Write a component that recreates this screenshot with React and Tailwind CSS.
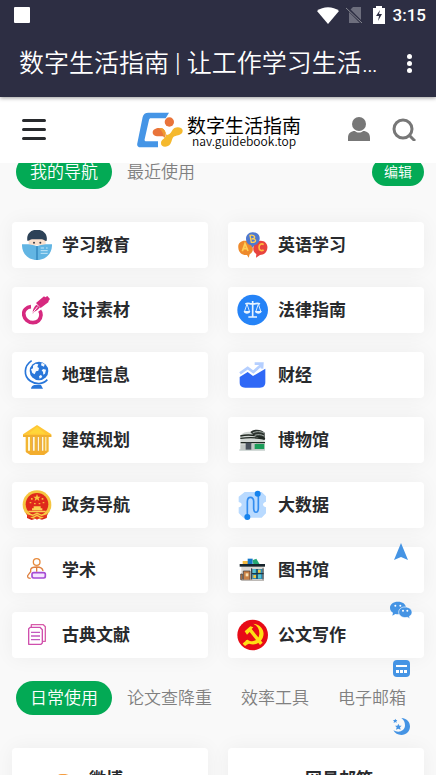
import React, { useState } from 'react';

const EducationIcon = () => (
  <svg viewBox="0 0 90 90" className="h-full w-full" aria-hidden="true">
    <path d="M20 26h51v20H20z" fill="#fbe0cc" />
    <path d="M16 32C13 10 28-1 45-1s33 12 29 33c-6 3-8-4-15-4-9 0-19 0-29 0-6 0-8 6-14 4z" fill="#2d4257" />
    <circle cx="36" cy="38" r="3" fill="#3b3b45" />
    <circle cx="55" cy="38" r="3" fill="#3b3b45" />
    <path d="M0 43c16-1 30 0 45 6 15-6 29-7 45-6 1 27-18 47-45 47S-1 70 0 43z" fill="#62b5e3" />
    <path d="M42 48l3 1 3-1v42h-6z" fill="#3f93c8" />
    <path d="M56 54h10M56 62h21M56 70h21M72 54h5" stroke="#c5e6f7" strokeWidth="3" />
  </svg>
);

const EnglishIcon = () => (
  <svg viewBox="0 0 90 90" className="h-full w-full" aria-hidden="true">
    <path d="M23 32C8 31-1 40 1 54c1 14 13 23 26 21l5 8 3-10c8-5 11-12 9-20-2-13-10-20-21-21z" fill="#ee8a2c" />
    <path d="M68 32c14 0 22 11 20 23-1 13-11 20-22 20l-12 8 1-11c-8-5-10-12-9-19 2-12 10-21 22-21z" fill="#e8433e" />
    <path d="M43 7c14-1 23 8 22 20-1 11-7 17-16 19l-5 7-5-7c-10-3-15-9-15-19 0-12 8-19 19-20z" fill="#4f79cf" />
    <path d="M13 64l8-23 9 22M16 56h12" fill="none" stroke="#ffcf55" strokeWidth="5" />
    <path d="M36 16l4 21c9 1 14-2 12-7-1-3-5-4-11-3 8-1 10-4 8-8-2-4-7-4-13-3z" fill="none" stroke="#ffcf55" strokeWidth="4" />
    <path d="M77 44c-6-5-14-1-14 8 0 9 7 12 14 8" fill="none" stroke="#ffb93e" strokeWidth="5" />
  </svg>
);

const DesignIcon = () => (
  <svg viewBox="0 0 90 90" className="h-full w-full" aria-hidden="true">
    <path d="M27 35C13 36 4 47 5 58c2 15 14 25 28 25 13 0 23-9 24-23 0-5-1-9-4-13" fill="none" stroke="#d6297f" strokeWidth="11" />
    <path d="M32 52c0-8 4-16 11-23l11 8c-5 7-10 11-18 14l-4 6z" fill="#d6297f" />
    <path d="M42 24l24-20 4 3 6-4 8 9-4 5-1 5-23 17z" fill="#d6297f" />
    <path d="M30 56l17-21" stroke="#fff" strokeWidth="3" />
  </svg>
);

const LawIcon = () => (
  <svg viewBox="0 0 90 90" className="h-full w-full overflow-visible" aria-hidden="true">
    <circle cx="44" cy="45" r="46" fill="#2583f7" />
    <path d="M44 18v48M22 27c11-5 14 2 22-1 8 3 11-4 22 1M31 66h26" fill="none" stroke="#e7f3ff" strokeWidth="5" />
    <path d="M27 27l-8 24h16zM61 27l-8 24h16z" fill="none" stroke="#d5e9ff" strokeWidth="3" />
    <path d="M17 48h20c-1 11-19 11-20 0zM51 48h20c-1 11-19 11-20 0z" fill="#e7f3ff" />
  </svg>
);

const GeographyIcon = () => (
  <svg viewBox="0 0 90 90" className="h-full w-full overflow-visible" aria-hidden="true">
    <circle cx="51" cy="33" r="28" fill="#2876d9" />
    <path d="M33 17l8-6 8 2-3 8 5 3-2 8-7 2-4 9-7-4-4-11 6-3zM59 8l9 5-2 7-9-4zM64 27l8 2-3 12-5 3-1-8-4-5zM51 49l6-5 4 7-8 5z" fill="#f5faff" />
    <path d="M29 2C5 18 4 48 25 63c16 11 38 11 51-4" fill="none" stroke="#2876d9" strokeWidth="5" />
    <path d="M37 75h20l6 11H27c1-6 4-10 10-11z" fill="#2876d9" />
  </svg>
);

const FinanceIcon = () => (
  <svg viewBox="0 0 90 90" className="h-full w-full" aria-hidden="true">
    <path d="M6 40l23-16 17 12 27-24M50 11h23l-1 15" fill="none" stroke="#b5cfff" strokeWidth="8" />
    <path d="M5 51l24-15 16 12 37-22v40c0 12-6 17-16 17H22C10 83 5 78 5 67z" fill="#2f68f6" />
  </svg>
);

const BuildingIcon = () => (
  <svg viewBox="0 0 90 90" className="h-full w-full overflow-visible" aria-hidden="true">
    <path d="M13 32h64v51L66 90H25l-12-8z" fill="#fff8dc" />
    <path d="M11 36h7v44h-7zM73 36h7v44h-7z" fill="#f2b632" />
    <path d="M24 36h7v43h-7zM38 36h7v43h-7zM51 36h7v43h-7zM64 36h6v43h-6z" fill="#f2b632" />
    <path d="M31 36h2v43h-2zM45 36h2v43h-2zM58 36h2v43h-2z" fill="#d88c3c" />
    <path d="M12 77h65v5L66 90H25l-13-8z" fill="#f3ad2d" />
    <path d="M45 0l43 28v8H3v-8z" fill="#ffc635" />
    <path d="M45 5l25 21H20z" fill="#ffd63a" />
    <path d="M3 31h85v4H3z" fill="#e9a42d" />
  </svg>
);

const MuseumIcon = () => (
  <svg viewBox="0 0 90 90" className="h-full w-full" aria-hidden="true">
    <path d="M7 31c9-9 21-12 30-10l5-4c13-4 31-2 38 7v50H7z" fill="#d3d8d5" />
    <path d="M37 21c8-9 32-10 43 2v22L46 31z" fill="#2c332f" />
    <path d="M7 33c20-5 48-3 74 8M7 40c24-3 48-3 73 2M8 53h73" fill="none" stroke="#202822" strokeWidth="4" />
    <path d="M44 24c12-6 24-5 34 0M50 31c10-3 20-3 28 2" fill="none" stroke="#a9b2ad" strokeWidth="3" />
    <path d="M8 59h16v14H8zM41 55h13v18H41z" fill="#c2c8c5" />
    <path d="M23 53h17v22H23z" fill="#48515c" />
    <path d="M50 57h29v15H50z" fill="#1b9d59" />
    <path d="M4 75h77" stroke="#a8b5b1" strokeWidth="3" />
  </svg>
);

const GovernmentIcon = () => (
  <svg viewBox="0 0 90 90" className="h-full w-full overflow-visible" aria-hidden="true">
    <path d="M15 69l15-4h29l17 4-2 15-14 5-15-4-16 5-14-6z" fill="#d62618" />
    <circle cx="45" cy="44" r="43" fill="#f5c541" />
    <circle cx="45" cy="43" r="34" fill="#df281c" />
    <path d="M45 12l3 8h8l-6 5 2 8-7-5-7 5 2-8-6-5h8z" fill="#f8c63e" />
    <path d="M27 24h5v5h-5zM59 24h5v5h-5zM23 36h5v4h-5zM62 36h5v4h-5zM36 39h5v4h-5zM50 39h5v4h-5z" fill="#f8b837" />
    <path d="M30 55h5v-6h21v6h5v6H30zM19 62h52v5H19z" fill="#fbd053" />
    <path d="M12 68c13 8 22 9 33 3 11 6 21 5 33-3l-5 15-15-3-13 9-13-9-14 3z" fill="#e53620" />
    <path d="M14 70l18 6 13-6 14 6 17-6M32 83l13-7 12 7" fill="none" stroke="#f8ca46" strokeWidth="4" />
  </svg>
);

const BigDataIcon = () => (
  <svg viewBox="0 0 90 90" className="h-full w-full overflow-visible" aria-hidden="true">
    <path d="M20 6h51l13 13v16c-12 3-12 14 0 17v18L71 83H16L2 69V52c12-3 12-13 0-16V20z" fill="#b9daff" />
    <path d="M28 76V35c0-17 19-17 19-1v20c0 17 14 17 14 0V13" fill="none" stroke="#338df0" strokeWidth="5" />
    <circle cx="59" cy="11" r="9" fill="#1683ed" />
    <circle cx="28" cy="81" r="9" fill="#1683ed" />
  </svg>
);

const ScholarIcon = () => (
  <svg viewBox="0 0 90 90" className="h-full w-full" aria-hidden="true">
    <circle cx="44" cy="21" r="10" fill="none" stroke="#e78b3d" strokeWidth="4" />
    <path d="M26 52v-8c1-6 7-8 18-8s18 3 19 12M44 36v14M26 50l-9 12c-1 6 2 8 9 8" fill="none" stroke="#df8140" strokeWidth="4" />
    <rect x="30" y="53" width="40" height="16" rx="5" fill="#f5e5ff" stroke="#a64bd3" strokeWidth="5" />
  </svg>
);

const LibraryIcon = () => (
  <svg viewBox="0 0 90 90" className="h-full w-full" aria-hidden="true">
    <path d="M10 34h68v42H10z" fill="#ddd9d4" />
    <path d="M14 18h17v10H14z" fill="#f5b83d" />
    <path d="M29 11h15v18H29z" fill="#1578c8" />
    <path d="M44 16l11-5 10 17H46z" fill="#25a873" />
    <path d="M5 27h76v8H5z" fill="#17242c" />
    <path d="M16 48h20v28H16zM8 57h5v17H8z" fill="#c98146" stroke="#303238" strokeWidth="2" />
    <path d="M23 55h8v9h-8z" fill="#fae2b5" />
    <path d="M43 42h30v30H43z" fill="#2b8fb8" />
    <path d="M45 43h8v11h-8zM60 58h9v12h-9z" fill="#59c5d2" />
    <path d="M60 44h8v9h-8zM46 60h8v9h-8z" fill="#edc742" />
    <path d="M41 40v34M75 40v34M42 56h35M57 42v30" stroke="#182a35" strokeWidth="3" />
    <path d="M10 76h68" stroke="#bebab6" strokeWidth="4" />
  </svg>
);

const LiteratureIcon = () => (
  <svg viewBox="0 0 90 90" className="h-full w-full" aria-hidden="true">
    <g fill="none" strokeLinejoin="round">
      <path d="M28 22v-8h36l6 6v44h-8" stroke="#d75ca9" strokeWidth="4" />
      <path d="M20 26l5-4h29l7 7v40l-4 4H20z" stroke="#cf4fad" strokeWidth="4" />
      <path d="M27 37h27M27 48h27M27 59h27" stroke="#c35ac0" strokeWidth="4" />
    </g>
  </svg>
);

const OfficialIcon = () => (
  <svg viewBox="0 0 90 90" className="h-full w-full overflow-visible" aria-hidden="true">
    <circle cx="44" cy="45" r="46" fill="#e70b17" />
    <path d="M46 11c23 2 37 23 28 43-7 17-25 23-41 17-5 1-8 5-12 7l-7-7c3-4 8-5 10-10l5-2c16 11 34 1 35-17 1-14-6-24-18-31z" fill="#ffdf14" />
    <path d="M20 34l17-15 9 3-5 5 33 41-8 7-31-39-8 8z" fill="#ffdf14" />
  </svg>
);

const categories = [
  { name: '学习教育', icon: EducationIcon },
  { name: '英语学习', icon: EnglishIcon },
  { name: '设计素材', icon: DesignIcon },
  { name: '法律指南', icon: LawIcon },
  { name: '地理信息', icon: GeographyIcon },
  { name: '财经', icon: FinanceIcon },
  { name: '建筑规划', icon: BuildingIcon },
  { name: '博物馆', icon: MuseumIcon },
  { name: '政务导航', icon: GovernmentIcon },
  { name: '大数据', icon: BigDataIcon },
  { name: '学术', icon: ScholarIcon },
  { name: '图书馆', icon: LibraryIcon },
  { name: '古典文献', icon: LiteratureIcon },
  { name: '公文写作', icon: OfficialIcon },
];

const dailyTabs = ['日常使用', '论文查降重', '效率工具', '电子邮箱'];

const TabButton = ({ label, active, onClick }) => (
  <button
    type="button"
    onClick={onClick}
    className={`h-[34px] shrink-0 whitespace-nowrap rounded-full px-[14px] pb-[2px] text-[17px] font-[350] leading-8 ${
      active ? 'bg-[#03aa55] text-white' : 'text-[#808080]'
    }`}
  >
    {label}
  </button>
);

const StatusBar = () => (
  <div className="flex h-[30px] items-center justify-between pl-[14px] pr-[10px]">
    <div className="h-4 w-4 rounded-[1px] bg-white" />
    <div className="flex items-center">
      <svg viewBox="0 0 22 17" className="mr-[7px] h-[17px] w-[22px]" aria-hidden="true">
        <path d="M0 4c6-5 16-5 22 0L11 17z" fill="#fff" />
      </svg>
      <svg viewBox="0 0 18 18" className="mr-[9px] h-[18px] w-[18px]" aria-hidden="true">
        <path d="M7 1h8v16H3V5z" fill="#6d6e7d" />
        <path d="M0 1l16 16" stroke="#2d2e43" strokeWidth="3" />
        <path d="M0 2l16 15" stroke="#85868f" strokeWidth="1" />
      </svg>
      <svg viewBox="0 0 12 18" className="mr-2 h-[18px] w-3" aria-hidden="true">
        <path d="M3 2V0h6v2h3v16H0V2z" fill="#fff" />
        <path d="M7 4l-4 6h3l-1 5 4-7H6z" fill="#2d2e43" />
      </svg>
      <span className="font-['Roboto',sans-serif] text-[17px] font-medium leading-[30px]">3:15</span>
    </div>
  </div>
);

const SiteHeader = () => (
  <header className="grid h-[66px] grid-cols-[1fr_auto_1fr] items-center bg-white pb-[2px] pl-[22px] pr-5">
    <button type="button" aria-label="菜单" className="flex h-6 w-6 flex-col justify-center gap-[6px]">
      <span className="h-[3px] w-full rounded-full bg-[#282a2d]" />
      <span className="h-[3px] w-full rounded-full bg-[#282a2d]" />
      <span className="h-[3px] w-full rounded-full bg-[#282a2d]" />
    </button>

    <a href="#home" className="flex items-center gap-1 pt-[2px]">
      <svg viewBox="0 0 138 108" className="h-9 w-[46px]" aria-hidden="true">
        <path d="M96 2L86 19H42c-4 0-5 2-6 5L23 82c-1 4 1 6 5 6h35v18H10C3 106-1 101 1 94L17 15C19 6 25 2 34 2z" fill="#4595e6" />
        <circle cx="97" cy="30" r="14" fill="#e9743a" />
        <path d="M47 61c0-14 26-18 35-7 5 7 5 15 2 24-4-7-12-5-21-5-9 0-16-4-16-12z" fill="#e9743a" />
        <path d="M72 48c14 2 15 22 18 21 6-2 11-4 15-13 6-14 30-13 32-1 1 15-17 15-24 18-9 4-7 14-13 23-8 12-29 11-28-3 0-12 17-13 15-26z" fill="#f5b92e" />
        <path d="M66 48c10-1 17 4 18 12 1 8 0 13-3 19-1-10-4-21-15-31z" fill="#ef9932" />
      </svg>
      <span className="flex flex-col items-center pt-1 text-black">
        <span className="whitespace-nowrap text-[19px] leading-[18px]">数字生活指南</span>
        <span className="text-[12px] font-[350] leading-[14px]">nav.guidebook.top</span>
      </span>
    </a>

    <div className="flex items-center justify-end gap-[22px]">
      <button type="button" aria-label="用户">
        <svg viewBox="0 0 22 24" className="h-6 w-[22px]" aria-hidden="true">
          <circle cx="11" cy="7" r="7" fill="#777777" />
          <path d="M0 24v-3c0-5 3-7 7-7 2 2 6 2 8 0 4 0 7 2 7 7v3z" fill="#777777" />
        </svg>
      </button>
      <button type="button" aria-label="搜索">
        <svg viewBox="0 0 24 24" className="h-6 w-6" aria-hidden="true">
          <circle cx="11" cy="12" r="9" fill="none" stroke="#777777" strokeWidth="3" />
          <path d="M17 18l6 6" stroke="#777777" strokeWidth="3" />
        </svg>
      </button>
    </div>
  </header>
);

const CategoryCard = ({ item }) => {
  const Icon = item.icon;
  return (
    <a
      href="#category"
      className="flex h-[46px] items-center gap-[10px] rounded-[4px] bg-white px-[10px] shadow-[0_0_20px_rgba(0,0,0,0.05)]"
    >
      <span className="h-[30px] w-[30px] shrink-0">
        <Icon />
      </span>
      <span className="whitespace-nowrap pb-[2px] text-[17px] font-bold leading-6 text-[#282a2d]">{item.name}</span>
    </a>
  );
};

const FloatingTools = () => (
  <nav className="absolute bottom-[38px] right-6 flex flex-col gap-[36px]">
    <button type="button" aria-label="返回顶部" className="flex h-[22px] w-[22px] items-center justify-center">
      <svg viewBox="0 0 14 18" className="h-[18px] w-[14px]" aria-hidden="true">
        <path d="M7 0l7 17-7-3-7 3z" fill="#4594e4" />
      </svg>
    </button>
    <button type="button" aria-label="微信" className="flex h-[22px] w-[22px] items-center justify-center">
      <svg viewBox="0 0 66 54" className="h-[18px] w-[22px]" aria-hidden="true">
        <path d="M24 2C9 2 0 10 0 20c0 7 4 12 9 15l-2 9 9-5c20 4 34-6 32-20C47 9 38 2 24 2z" fill="#4594e4" />
        <path d="M45 18c-12 0-19 7-19 16 0 12 14 18 26 15l8 4-2-7c5-3 8-7 8-12 0-9-8-16-21-16z" fill="#4594e4" stroke="#fff" strokeWidth="2" />
        <circle cx="16" cy="14" r="3" fill="#fff" />
        <circle cx="31" cy="14" r="3" fill="#fff" />
        <circle cx="39" cy="29" r="3" fill="#fff" />
        <circle cx="52" cy="29" r="3" fill="#fff" />
      </svg>
    </button>
    <button type="button" aria-label="小工具" className="flex h-[22px] w-[22px] items-center justify-center">
      <svg viewBox="0 0 17 17" className="h-[17px] w-[17px]" aria-hidden="true">
        <rect width="17" height="17" rx="4" fill="#4594e4" />
        <path d="M3 5h11v2H3zM3 10h3v3H3zM7 10h3v3H7zM11 10h3v3h-3z" fill="#fff" />
      </svg>
    </button>
    <button type="button" aria-label="夜间模式" className="flex h-[22px] w-[22px] items-center justify-center">
      <svg viewBox="0 0 51 51" className="h-[17px] w-[17px]" aria-hidden="true">
        <path d="M25 0c15 0 26 11 26 25 0 15-11 26-26 26-11 0-19-5-24-14 16 9 35 2 35-15 0-10-4-17-11-22z" fill="#4594e4" />
        <path d="M16 17l3 6h7l-5 5 2 7-7-3-7 3 2-7-5-5h7zM7 2l2 4h4l-3 4 1 5-4-3-5 3 1-5-3-4h5z" fill="#4594e4" />
      </svg>
    </button>
  </nav>
);

const App = () => {
  const [navTab, setNavTab] = useState('我的导航');
  const [dailyTab, setDailyTab] = useState(dailyTabs[0]);

  return (
    <div className="relative flex h-screen flex-col overflow-hidden bg-[#f9f9f9] font-['Noto_Sans_CJK_SC',sans-serif]">
      {/* phone status bar and browser title */}
      <div className="relative z-10 shrink-0 bg-[#2d2e43] text-white shadow-[0_1px_4px_rgba(0,0,0,0.4)]">
        <StatusBar />
        <div className="flex h-[67px] items-center justify-between pl-[19px] pr-5">
          <h1 className="truncate font-['Roboto','Noto_Sans_CJK_SC',sans-serif] text-[25px] font-[350] leading-9">
            数字生活指南 | 让工作学习生活…
          </h1>
          <button type="button" aria-label="更多" className="flex w-[14px] shrink-0 flex-col items-center gap-[2px]">
            <span className="h-[5px] w-[5px] rounded-full bg-white" />
            <span className="h-[5px] w-[5px] rounded-full bg-white" />
            <span className="h-[5px] w-[5px] rounded-full bg-white" />
          </button>
        </div>
      </div>

      <SiteHeader />

      <main className="min-h-0 flex-1 overflow-hidden px-3">
        <div className="-mt-2 flex items-center justify-between pl-1">
          <div className="flex gap-px">
            {['我的导航', '最近使用'].map((label) => (
              <TabButton key={label} label={label} active={navTab === label} onClick={() => setNavTab(label)} />
            ))}
          </div>
          <button type="button" className="h-7 rounded-full bg-[#03aa55] px-3 pb-[2px] text-[14px] font-[350] leading-[26px] text-white">
            编辑
          </button>
        </div>

        <div className="mt-[33px] grid grid-cols-2 gap-x-5 gap-y-[19px]">
          {categories.map((item) => (
            <CategoryCard key={item.name} item={item} />
          ))}
        </div>

        <div className="mt-[23px] flex gap-px pl-1">
          {dailyTabs.map((label) => (
            <TabButton key={label} label={label} active={dailyTab === label} onClick={() => setDailyTab(label)} />
          ))}
        </div>

        <div className="mt-[33px] grid grid-cols-2 gap-x-5">
          {['微博', '网易邮箱'].map((name) => (
            <a
              key={name}
              href="#site"
              className="flex h-20 gap-[10px] rounded-[4px] bg-white pl-[27px] pt-[18px] shadow-[0_0_20px_rgba(0,0,0,0.05)]"
            >
              <span className="h-10 w-10 shrink-0 pt-2">
                {name === '微博' && (
                  <svg viewBox="0 0 40 32" className="h-8 w-10" aria-hidden="true">
                    <path d="M20 2c10-3 18 6 15 15" fill="none" stroke="#f59e42" strokeWidth="3" />
                    <ellipse cx="18" cy="21" rx="16" ry="10" fill="#e6162d" />
                  </svg>
                )}
              </span>
              <span className="whitespace-nowrap text-[17px] font-bold leading-6 text-[#282a2d]">{name}</span>
            </a>
          ))}
        </div>
      </main>

      <FloatingTools />
    </div>
  );
};

export default App;
